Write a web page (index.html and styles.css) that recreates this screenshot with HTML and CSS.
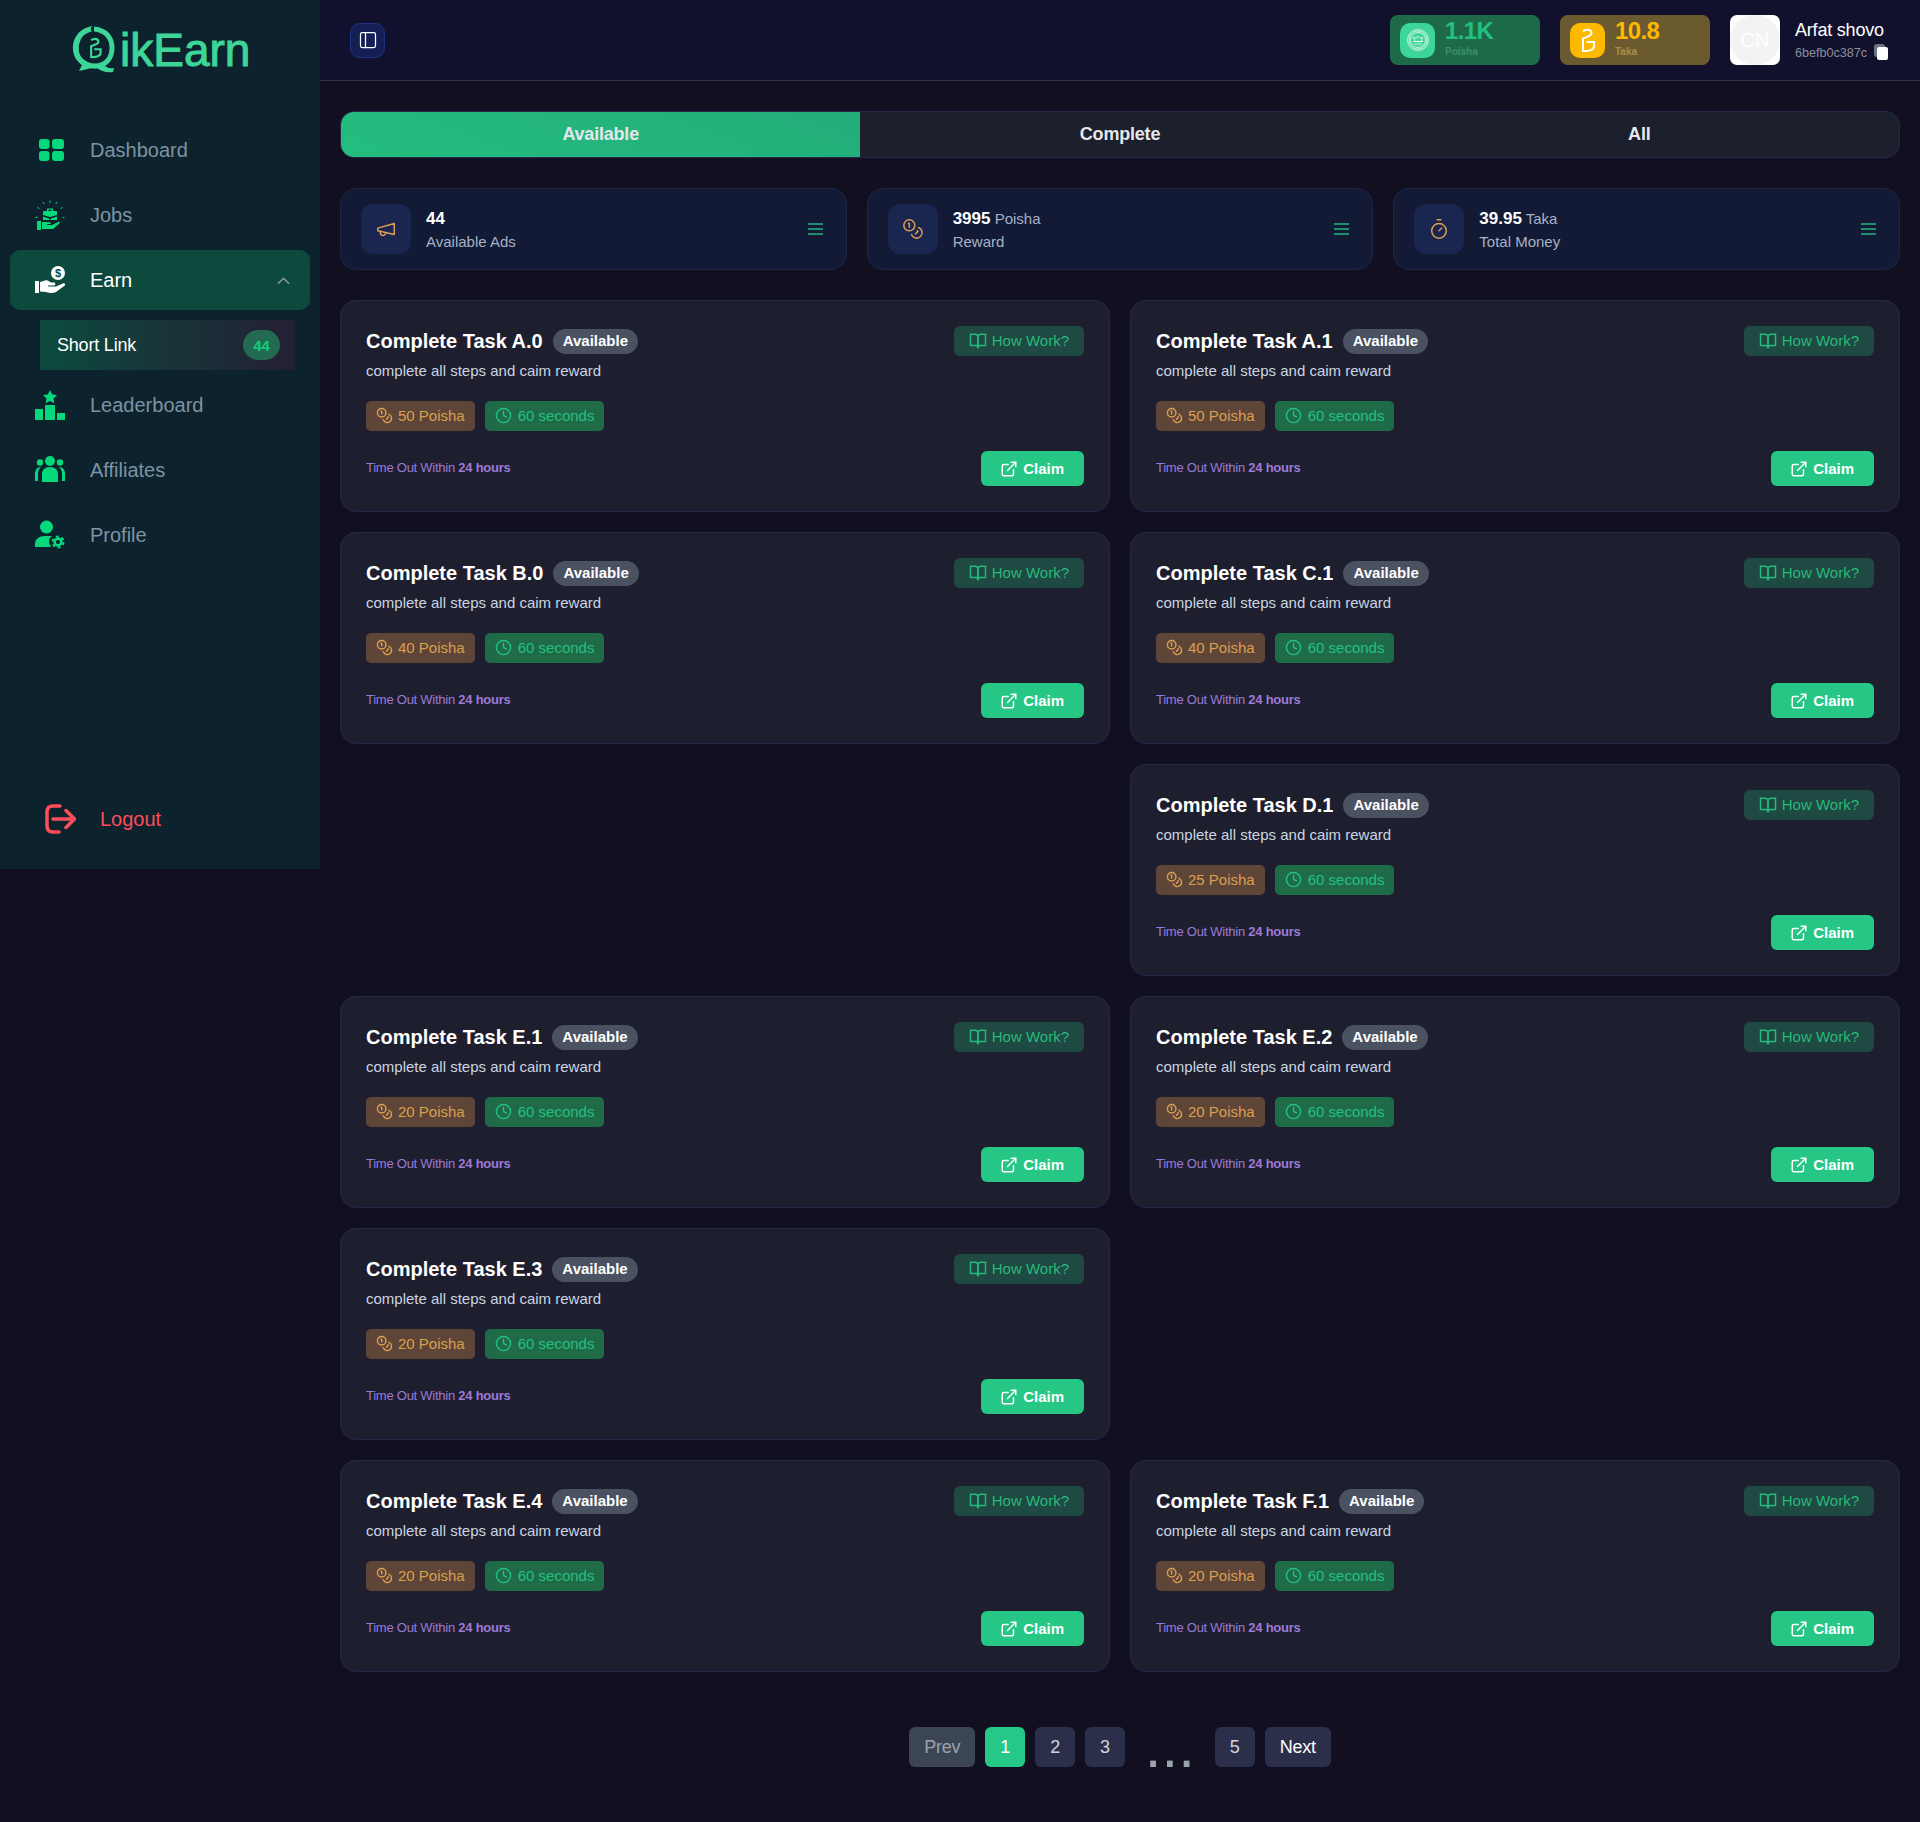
FILE: index.html
```html
<!DOCTYPE html>
<html lang="en">
<head>
  <meta charset="UTF-8">
  <meta name="viewport" content="width=device-width, initial-scale=1.0">
  <title>QikEarn Short Link</title>
  <link rel="stylesheet" href="styles.css">
</head>
<body>
  <svg class="sprite" width="0" height="0">
    <symbol id="coins" viewBox="0 0 24 24"><circle cx="8" cy="8" r="6"/><path d="M18.09 10.37A6 6 0 1 1 10.34 18"/><path d="M7 6h1v4"/><path d="m16.71 13.88.7.71-2.82 2.82"/></symbol>
    <symbol id="clock" viewBox="0 0 24 24"><circle cx="12" cy="12" r="10"/><path d="M12 6v6l4 2"/></symbol>
    <symbol id="book" viewBox="0 0 24 24"><path d="M2 3h6a4 4 0 0 1 4 4v14a3 3 0 0 0-3-3H2z"/><path d="M22 3h-6a4 4 0 0 0-4 4v14a3 3 0 0 1 3-3h7z"/></symbol>
    <symbol id="link" viewBox="0 0 24 24"><path d="M18 13v6a2 2 0 0 1-2 2H5a2 2 0 0 1-2-2V8a2 2 0 0 1 2-2h6"/><path d="M15 3h6v6"/><path d="M10 14 21 3"/></symbol>
    <symbol id="burger" viewBox="0 0 15 12"><path d="M0 1h15M0 6h15M0 11h15"/></symbol>
    <symbol id="gmark" viewBox="0 0 35 35"><path d="M13 8.500C15 6.500 21 5.500 21.500 10C21.500 13.500 16 14 13 15.500V28C19 28.500 24 27 24 23V19H16.500"/></symbol>
  </svg>

  <aside class="sidebar">
    <div class="logo">
      <svg class="logo-q" viewBox="70 24 50 50">
        <path class="q-ring" d="M91 29C79 32 75 41 76 50C77 60 85 66 95 66C106 66 112 58 112 48C112 38 106 30 94 29"/>
        <path class="q-fill" d="M93 26C81 28 72 37 73 50C74 58 78 62 82 65L79 71L92 68C97 69 101 67 103 66C99 66 88 65 81 57C76 48 79 36 93 26Z"/>
        <path class="q-fill" d="M102 63C105 67 109 69 114 68L113 72C106 73 100 71 96 67Z"/>
        <svg x="80" y="33" width="30" height="30"><use href="#gmark" class="q-mark"/></svg>
      </svg>
      <span class="logo-text">ikEarn</span>
    </div>

    <nav class="nav">
      <a class="nav-item" href="#">
        <svg class="nav-ico" viewBox="0 0 30 30"><rect x="4" y="4" width="10.500" height="10" rx="3"/><rect x="17" y="4" width="12" height="10" rx="3"/><rect x="4" y="16" width="10.500" height="10" rx="3"/><rect x="17" y="16" width="12" height="10" rx="3"/></svg>
        Dashboard
      </a>
      <a class="nav-item" href="#">
        <svg class="nav-ico" viewBox="0 0 30 30"><path d="M9 11h12a1 1 0 0 1 1 1v3l-7 2-7-2v-3a1 1 0 0 1 1-1zM8 16.500l6 2v1h2v-1l6-2V20H8zM12 11V8.500h6V11h-1.300V9.800h-3.400V11z"/><path d="M2 21h4v9H2zM7 22h6c2 0 3 1 3 2h-4v1h5l6-3c1-.6 2.500.5 1.500 1.500L18 29H7z"/><path class="nav-ray" d="M15 .5v2.500M8 2l1.200 2M22 2l-1.200 2M2.500 7.500l2 1M27.500 7.500l-2 1M.5 17.500h2M27.500 17.500h2"/></svg>
        Jobs
      </a>
      <a class="nav-item active" href="#">
        <svg class="nav-ico" viewBox="0 0 30 30"><circle cx="23" cy="8" r="7"/><text class="coin-sign" x="23" y="12">$</text><path d="M0 16h4v12H0zM5 17l5-1.500c2-.5 3 0 4 .8l2 1.200h3c1.500 0 2 2.500 0 3h-6v1h8l7-3c2-.6 3 1 1.500 2.200L21 27c-3 1.500-7 1-10 0l-6-.5z"/></svg>
        Earn
        <svg class="chev" viewBox="0 0 14 8"><path d="M1 7l6-6 6 6"/></svg>
      </a>
      <a class="sub-item" href="#">Short Link <span class="sub-badge">44</span></a>
      <a class="nav-item" href="#">
        <svg class="nav-ico" viewBox="0 0 30 30"><path d="M15 0l2.200 4.400 4.800.7-3.500 3.400.8 4.800-4.300-2.300-4.300 2.300.8-4.800L8 5.100l4.800-.7z"/><rect y="19" width="8" height="11"/><rect x="10" y="15" width="10" height="15" rx="1"/><rect x="22" y="23" width="8" height="7"/></svg>
        Leaderboard
      </a>
      <a class="nav-item" href="#">
        <svg class="nav-ico" viewBox="0 0 30 30"><circle cx="15" cy="6" r="5"/><circle cx="5" cy="7.500" r="3.200"/><circle cx="25" cy="7.500" r="3.200"/><path d="M7 27V19c0-4 3-7 8-7s8 3 8 7v8zM0 26v-7c0-4 2-7 6-7-2 2-3 4-3 7v7zM30 26v-7c0-4-2-7-6-7 2 2 3 4 3 7v7z"/></svg>
        Affiliates
      </a>
      <a class="nav-item" href="#">
        <svg class="nav-ico" viewBox="0 0 30 30"><circle cx="11.500" cy="7" r="6.500"/><path d="M0 27v-3c0-5 4-8 10-8h7c-2 1.500-3 3-3 5 0 2 1 4 2 6z"/><circle class="gear-hub" cx="23" cy="22" r="3.400"/><circle class="gear-teeth" cx="23" cy="22" r="5.500"/></svg>
        Profile
      </a>
    </nav>

    <a class="logout" href="#">
      <svg class="logout-ico" viewBox="0 0 32 32"><path d="M16 3H9C5 3 3 5 3 9v14c0 4 2 6 6 6h6"/><path d="M9 16h21M22 7.500l8.500 8.500-8.500 8.500"/></svg>
      Logout
    </a>
  </aside>

  <div class="page">
    <header class="topbar">
      <button class="toggle">
        <svg class="ico toggle-ico" viewBox="0 0 24 24"><rect x="3" y="3" width="18" height="18" rx="2"/><path d="M9 3v18"/></svg>
      </button>
      <div class="wallet wallet-green">
        <span class="wallet-ico">
          <svg viewBox="0 0 24 24" class="seal"><circle cx="12" cy="12" r="10.500"/><circle cx="12" cy="12" r="9"/><circle cx="12" cy="12" r="7.500"/><path d="M7 13.500h10M8 16h8M7.500 9l2.500 1.500 2-2.500 2 2.500L16.500 9l-1 4.500h-7z"/></svg>
        </span>
        <div>
          <div class="wallet-value">1.1K</div>
          <div class="wallet-label">Poisha</div>
        </div>
      </div>
      <div class="wallet wallet-gold">
        <span class="wallet-ico"><svg class="gmark-white" viewBox="0 0 35 35"><use href="#gmark"/></svg></span>
        <div>
          <div class="wallet-value">10.8</div>
          <div class="wallet-label">Taka</div>
        </div>
      </div>
      <div class="avatar"><span>CN</span></div>
      <div class="user">
        <div class="user-name">Arfat shovo</div>
        <div class="user-id">6befb0c387c
          <svg class="copy" viewBox="0 0 15 17"><rect x="0" y="0" width="11" height="13" rx="3" fill="#6b7280"/><rect x="3" y="3" width="11" height="13" rx="2" fill="#fff"/></svg>
        </div>
      </div>
    </header>

    <main class="content">
      <div class="tabs">
        <a class="tab tab-on" href="#">Available</a>
        <a class="tab" href="#">Complete</a>
        <a class="tab" href="#">All</a>
      </div>

      <section class="stats">
        <div class="stat">
          <span class="stat-ico"><svg class="ico" viewBox="0 0 24 24"><path d="m3 11 18-5v12L3 14v-3z"/><path d="M11.600 16.800a3 3 0 1 1-5.800-1.600"/></svg></span>
          <div class="stat-text"><b>44</b><span>Available Ads</span></div>
          <svg class="burger"><use href="#burger"/></svg>
        </div>
        <div class="stat">
          <span class="stat-ico"><svg class="ico"><use href="#coins"/></svg></span>
          <div class="stat-text"><div><b>3995</b> Poisha</div><span>Reward</span></div>
          <svg class="burger"><use href="#burger"/></svg>
        </div>
        <div class="stat">
          <span class="stat-ico"><svg class="ico" viewBox="0 0 24 24"><path d="M10 2h4"/><path d="m12 14 3-3"/><circle cx="12" cy="14" r="8"/></svg></span>
          <div class="stat-text"><div><b>39.95</b> Taka</div><span>Total Money</span></div>
          <svg class="burger"><use href="#burger"/></svg>
        </div>
      </section>

      <section class="tasks">
        <article class="task">
          <div class="task-main">
            <div class="task-head"><h3>Complete Task A.0</h3><span class="badge">Available</span></div>
            <p class="task-desc">complete all steps and caim reward</p>
            <div class="chips">
              <span class="chip chip-coin"><svg class="ico"><use href="#coins"/></svg>50 Poisha</span>
              <span class="chip chip-time"><svg class="ico"><use href="#clock"/></svg>60 seconds</span>
            </div>
            <p class="task-time">Time Out Within <b>24 hours</b></p>
          </div>
          <div class="task-side">
            <a class="how" href="#"><svg class="ico"><use href="#book"/></svg>How Work?</a>
            <a class="claim" href="#"><svg class="ico"><use href="#link"/></svg>Claim</a>
          </div>
        </article>
        <article class="task">
          <div class="task-main">
            <div class="task-head"><h3>Complete Task A.1</h3><span class="badge">Available</span></div>
            <p class="task-desc">complete all steps and caim reward</p>
            <div class="chips">
              <span class="chip chip-coin"><svg class="ico"><use href="#coins"/></svg>50 Poisha</span>
              <span class="chip chip-time"><svg class="ico"><use href="#clock"/></svg>60 seconds</span>
            </div>
            <p class="task-time">Time Out Within <b>24 hours</b></p>
          </div>
          <div class="task-side">
            <a class="how" href="#"><svg class="ico"><use href="#book"/></svg>How Work?</a>
            <a class="claim" href="#"><svg class="ico"><use href="#link"/></svg>Claim</a>
          </div>
        </article>
        <article class="task">
          <div class="task-main">
            <div class="task-head"><h3>Complete Task B.0</h3><span class="badge">Available</span></div>
            <p class="task-desc">complete all steps and caim reward</p>
            <div class="chips">
              <span class="chip chip-coin"><svg class="ico"><use href="#coins"/></svg>40 Poisha</span>
              <span class="chip chip-time"><svg class="ico"><use href="#clock"/></svg>60 seconds</span>
            </div>
            <p class="task-time">Time Out Within <b>24 hours</b></p>
          </div>
          <div class="task-side">
            <a class="how" href="#"><svg class="ico"><use href="#book"/></svg>How Work?</a>
            <a class="claim" href="#"><svg class="ico"><use href="#link"/></svg>Claim</a>
          </div>
        </article>
        <article class="task">
          <div class="task-main">
            <div class="task-head"><h3>Complete Task C.1</h3><span class="badge">Available</span></div>
            <p class="task-desc">complete all steps and caim reward</p>
            <div class="chips">
              <span class="chip chip-coin"><svg class="ico"><use href="#coins"/></svg>40 Poisha</span>
              <span class="chip chip-time"><svg class="ico"><use href="#clock"/></svg>60 seconds</span>
            </div>
            <p class="task-time">Time Out Within <b>24 hours</b></p>
          </div>
          <div class="task-side">
            <a class="how" href="#"><svg class="ico"><use href="#book"/></svg>How Work?</a>
            <a class="claim" href="#"><svg class="ico"><use href="#link"/></svg>Claim</a>
          </div>
        </article>
        <div class="task-gap"></div>
        <article class="task">
          <div class="task-main">
            <div class="task-head"><h3>Complete Task D.1</h3><span class="badge">Available</span></div>
            <p class="task-desc">complete all steps and caim reward</p>
            <div class="chips">
              <span class="chip chip-coin"><svg class="ico"><use href="#coins"/></svg>25 Poisha</span>
              <span class="chip chip-time"><svg class="ico"><use href="#clock"/></svg>60 seconds</span>
            </div>
            <p class="task-time">Time Out Within <b>24 hours</b></p>
          </div>
          <div class="task-side">
            <a class="how" href="#"><svg class="ico"><use href="#book"/></svg>How Work?</a>
            <a class="claim" href="#"><svg class="ico"><use href="#link"/></svg>Claim</a>
          </div>
        </article>
        <article class="task">
          <div class="task-main">
            <div class="task-head"><h3>Complete Task E.1</h3><span class="badge">Available</span></div>
            <p class="task-desc">complete all steps and caim reward</p>
            <div class="chips">
              <span class="chip chip-coin"><svg class="ico"><use href="#coins"/></svg>20 Poisha</span>
              <span class="chip chip-time"><svg class="ico"><use href="#clock"/></svg>60 seconds</span>
            </div>
            <p class="task-time">Time Out Within <b>24 hours</b></p>
          </div>
          <div class="task-side">
            <a class="how" href="#"><svg class="ico"><use href="#book"/></svg>How Work?</a>
            <a class="claim" href="#"><svg class="ico"><use href="#link"/></svg>Claim</a>
          </div>
        </article>
        <article class="task">
          <div class="task-main">
            <div class="task-head"><h3>Complete Task E.2</h3><span class="badge">Available</span></div>
            <p class="task-desc">complete all steps and caim reward</p>
            <div class="chips">
              <span class="chip chip-coin"><svg class="ico"><use href="#coins"/></svg>20 Poisha</span>
              <span class="chip chip-time"><svg class="ico"><use href="#clock"/></svg>60 seconds</span>
            </div>
            <p class="task-time">Time Out Within <b>24 hours</b></p>
          </div>
          <div class="task-side">
            <a class="how" href="#"><svg class="ico"><use href="#book"/></svg>How Work?</a>
            <a class="claim" href="#"><svg class="ico"><use href="#link"/></svg>Claim</a>
          </div>
        </article>
        <article class="task">
          <div class="task-main">
            <div class="task-head"><h3>Complete Task E.3</h3><span class="badge">Available</span></div>
            <p class="task-desc">complete all steps and caim reward</p>
            <div class="chips">
              <span class="chip chip-coin"><svg class="ico"><use href="#coins"/></svg>20 Poisha</span>
              <span class="chip chip-time"><svg class="ico"><use href="#clock"/></svg>60 seconds</span>
            </div>
            <p class="task-time">Time Out Within <b>24 hours</b></p>
          </div>
          <div class="task-side">
            <a class="how" href="#"><svg class="ico"><use href="#book"/></svg>How Work?</a>
            <a class="claim" href="#"><svg class="ico"><use href="#link"/></svg>Claim</a>
          </div>
        </article>
        <div class="task-gap"></div>
        <article class="task">
          <div class="task-main">
            <div class="task-head"><h3>Complete Task E.4</h3><span class="badge">Available</span></div>
            <p class="task-desc">complete all steps and caim reward</p>
            <div class="chips">
              <span class="chip chip-coin"><svg class="ico"><use href="#coins"/></svg>20 Poisha</span>
              <span class="chip chip-time"><svg class="ico"><use href="#clock"/></svg>60 seconds</span>
            </div>
            <p class="task-time">Time Out Within <b>24 hours</b></p>
          </div>
          <div class="task-side">
            <a class="how" href="#"><svg class="ico"><use href="#book"/></svg>How Work?</a>
            <a class="claim" href="#"><svg class="ico"><use href="#link"/></svg>Claim</a>
          </div>
        </article>
        <article class="task">
          <div class="task-main">
            <div class="task-head"><h3>Complete Task F.1</h3><span class="badge">Available</span></div>
            <p class="task-desc">complete all steps and caim reward</p>
            <div class="chips">
              <span class="chip chip-coin"><svg class="ico"><use href="#coins"/></svg>20 Poisha</span>
              <span class="chip chip-time"><svg class="ico"><use href="#clock"/></svg>60 seconds</span>
            </div>
            <p class="task-time">Time Out Within <b>24 hours</b></p>
          </div>
          <div class="task-side">
            <a class="how" href="#"><svg class="ico"><use href="#book"/></svg>How Work?</a>
            <a class="claim" href="#"><svg class="ico"><use href="#link"/></svg>Claim</a>
          </div>
        </article>
      </section>

      <div class="pager">
        <a class="pg pg-off" href="#">Prev</a>
        <a class="pg pg-on" href="#">1</a>
        <a class="pg" href="#">2</a>
        <a class="pg" href="#">3</a>
        <span class="pg-dots">...</span>
        <a class="pg" href="#">5</a>
        <a class="pg pg-next" href="#">Next</a>
      </div>
    </main>
  </div>
</body>
</html>
```

FILE: styles.css
```css
* {
  box-sizing: border-box;
}
body {
  margin: 0;
  min-height: 1822px;
  display: flex;
  align-items: flex-start;
  font-family: "Liberation Sans", Arial, sans-serif;
  background: #110f20;
  color: #fff;
}
a {
  text-decoration: none;
  color: inherit;
}
h3, p {
  margin: 0;
}
.sprite {
  position: absolute;
}
.ico {
  width: 17px;
  height: 17px;
  fill: none;
  stroke: currentColor;
  stroke-width: 2;
  stroke-linecap: round;
  stroke-linejoin: round;
  flex: none;
}

/* sidebar */
.sidebar {
  width: 320px;
  height: 869px;
  flex: none;
  display: flex;
  flex-direction: column;
  background: #0c222d;
}
.logo {
  height: 120px;
  display: flex;
  align-items: flex-start;
  padding: 24px 0 0 70px;
}
.logo-q {
  width: 50px;
  height: 50px;
  flex: none;
}
.q-ring {
  fill: none;
  stroke: #3dd598;
  stroke-width: 5;
}
.q-fill {
  fill: #3dd598;
}
.q-mark {
  fill: none;
  stroke: #3dd598;
  stroke-width: 2.500;
}
.logo-text {
  font-size: 46px;
  line-height: 50px;
  color: #3dd598;
  -webkit-text-stroke: 1px #3dd598;
  margin-top: 1px;
}
.nav {
  display: flex;
  flex-direction: column;
  gap: 5px;
}
.nav-item {
  height: 60px;
  margin: 0 10px;
  padding: 0 25px;
  display: flex;
  align-items: center;
  gap: 25px;
  font-size: 20px;
  color: #7e93a3;
  border-radius: 10px;
}
.nav-ico {
  width: 30px;
  height: 30px;
  flex: none;
  fill: #05d97c;
}
.nav-ray {
  fill: none;
  stroke: #05d97c;
  stroke-width: 1;
}
.gear-hub {
  fill: none;
  stroke: #05d97c;
  stroke-width: 2.600;
}
.gear-teeth {
  fill: none;
  stroke: #05d97c;
  stroke-width: 2;
  stroke-dasharray: 3 2.760;
}
.nav-item.active {
  background: #0c4a3e;
  color: #fff;
}
.active .nav-ico {
  fill: #fff;
}
.coin-sign {
  fill: #0c4a3e;
  font-size: 11px;
  font-weight: bold;
  text-anchor: middle;
}
.chev {
  width: 13px;
  height: 8px;
  margin-left: auto;
  margin-right: -5px;
  margin-top: 2px;
  fill: none;
  stroke: #8a9ca6;
  stroke-width: 1.500;
}
.sub-item {
  height: 50px;
  margin: 5px 25px 0 40px;
  padding: 0 17px;
  display: flex;
  align-items: center;
  justify-content: space-between;
  font-size: 18px;
  letter-spacing: -.2px;
  background: linear-gradient(90deg, #0c4a3e, #241f33);
}
.sub-badge {
  width: 37px;
  height: 30px;
  margin-right: -2px;
  display: flex;
  align-items: center;
  justify-content: center;
  font-size: 15px;
  font-weight: bold;
  letter-spacing: 0;
  color: #12cc7c;
  background: #236a53;
  border-radius: 15px;
}
.logout {
  height: 60px;
  margin-top: auto;
  margin-bottom: 20px;
  padding-left: 44px;
  display: flex;
  align-items: center;
  gap: 24px;
  font-size: 20px;
  color: #ff4d5a;
}
.logout-ico {
  width: 32px;
  height: 32px;
  fill: none;
  stroke: #ff4d5a;
  stroke-width: 3.500;
  stroke-linecap: round;
  stroke-linejoin: round;
}

/* top bar */
.page {
  flex: 1;
  min-width: 0;
}
.topbar {
  height: 81px;
  padding: 0 20px 0 30px;
  display: flex;
  align-items: center;
  background: #12112d;
  border-bottom: 1px solid #37344d;
}
.toggle {
  width: 35px;
  height: 35px;
  margin-right: auto;
  padding: 0;
  display: flex;
  align-items: center;
  justify-content: center;
  color: #fff;
  background: #131f55;
  border: 1px solid #1e3480;
  border-radius: 10px;
}
.toggle-ico {
  width: 20px;
  height: 20px;
  stroke-width: 1.500;
}
.wallet {
  width: 150px;
  height: 50px;
  margin-right: 20px;
  padding-left: 10px;
  display: flex;
  align-items: center;
  gap: 10px;
  border-radius: 8px;
  font-weight: bold;
}
.wallet-ico {
  width: 35px;
  height: 35px;
  display: flex;
  align-items: center;
  justify-content: center;
  border-radius: 10px;
  flex: none;
}
.wallet-value {
  font-size: 24px;
  line-height: 26px;
  letter-spacing: -.6px;
  margin-top: -5px;
}
.wallet-label {
  font-size: 10px;
  line-height: 13px;
  margin-top: 1px;
}
.wallet-green {
  background: #1e6a48;
}
.wallet-green .wallet-ico {
  background: #3dd598;
}
.wallet-green .wallet-value {
  color: #22c07e;
}
.wallet-green .wallet-label {
  color: #3c8f6a;
}
.seal {
  width: 24px;
  height: 24px;
  fill: none;
  stroke: #fff;
  stroke-width: .7;
}
.wallet-gold {
  background: #6b5a30;
}
.wallet-gold .wallet-ico {
  background: #fdb900;
}
.wallet-gold .wallet-value {
  color: #fdb900;
}
.wallet-gold .wallet-label {
  color: #a88f45;
}
.gmark-white {
  width: 35px;
  height: 35px;
  fill: none;
  stroke: #fff;
  stroke-width: 2;
}
.avatar {
  width: 50px;
  height: 50px;
  background: #fff;
  border-radius: 7px;
  flex: none;
}
.avatar span {
  width: 100%;
  height: 100%;
  display: flex;
  align-items: center;
  justify-content: center;
  font-size: 20px;
  color: #fff;
  background: #f3f3f3;
  border-radius: 50%;
}
.user {
  margin-left: 15px;
  width: 105px;
}
.user-name {
  font-size: 18px;
  line-height: 22px;
  letter-spacing: -.2px;
}
.user-id {
  margin-top: 3px;
  display: flex;
  align-items: center;
  gap: 7px;
  font-size: 12.600px;
  line-height: 16px;
  color: #8a8f99;
}
.copy {
  width: 15px;
  height: 17px;
}

/* main */
.content {
  padding: 30px 20px 0;
}
.tabs {
  height: 47px;
  display: grid;
  grid-template-columns: repeat(3, 1fr);
  background: #1c1f2c;
  border: 1px solid #24294a;
  border-radius: 14px;
  overflow: hidden;
}
.tab {
  display: flex;
  align-items: center;
  justify-content: center;
  font-size: 18px;
  font-weight: bold;
  letter-spacing: -.2px;
  color: #e5e7eb;
}
.tab-on {
  background: linear-gradient(200deg, #22ad78, #25bd80);
}
.stats {
  margin-top: 30px;
  display: grid;
  grid-template-columns: repeat(3, 1fr);
  gap: 20px;
}
.stat {
  height: 82px;
  padding: 0 23px 0 20px;
  display: flex;
  align-items: center;
  gap: 15px;
  background: #121a35;
  border: 1px solid #1c2748;
  border-radius: 16px;
}
.stat-ico {
  width: 50px;
  height: 50px;
  display: flex;
  align-items: center;
  justify-content: center;
  color: #dc9f50;
  background: #1a2650;
  border-radius: 12px;
  flex: none;
}
.stat-ico .ico {
  width: 22px;
  height: 22px;
  stroke-width: 1.600;
}
.stat-text {
  flex: 1;
  padding-top: 1px;
  font-size: 15px;
  line-height: 23px;
  color: #a6b1c6;
}
.stat-text b {
  font-size: 17px;
  color: #fff;
}
.stat-text span {
  display: block;
}
.burger {
  width: 15px;
  height: 12px;
  fill: none;
  stroke: #1d8f6e;
  stroke-width: 2;
}

/* task cards */
.tasks {
  margin-top: 30px;
  display: grid;
  grid-template-columns: repeat(2, 1fr);
  gap: 20px;
}
.task, .task-gap {
  height: 212px;
}
.task {
  padding: 25px;
  display: flex;
  justify-content: space-between;
  background: #1e1f2e;
  border: 1px solid #24294a;
  border-radius: 16px;
}
.task-head {
  height: 30px;
  display: flex;
  align-items: center;
  gap: 10px;
}
.task-head h3 {
  font-size: 20px;
  font-weight: bold;
}
.badge {
  height: 25px;
  padding: 0 10px 1px;
  display: flex;
  align-items: center;
  font-size: 15px;
  font-weight: bold;
  background: #4a5160;
  border-radius: 13px;
}
.task-desc {
  margin-top: 5px;
  font-size: 15px;
  line-height: 20px;
  color: #cbd5e1;
}
.chips {
  margin-top: 20px;
  display: flex;
  gap: 10px;
}
.chip {
  height: 30px;
  padding: 0 10px 1px;
  display: flex;
  align-items: center;
  gap: 5px;
  font-size: 15px;
  border-radius: 5px;
}
.chip-coin {
  color: #d9a050;
  background: #5e4538;
}
.chip-time {
  gap: 6px;
  color: #24c07f;
  background: #1f6b47;
}
.task-time {
  margin-top: 28px;
  font-size: 13px;
  line-height: 18px;
  letter-spacing: -.25px;
  color: #9c7ad8;
}
.task-side {
  display: flex;
  flex-direction: column;
  align-items: flex-end;
  justify-content: space-between;
}
.how {
  height: 30px;
  padding: 0 15px 1px;
  display: flex;
  align-items: center;
  gap: 5px;
  font-size: 15px;
  color: #25b97a;
  background: #1f4a43;
  border-radius: 6px;
}
.how .ico {
  width: 18px;
  height: 18px;
}
.claim {
  height: 35px;
  padding: 0 20px 0 19px;
  display: flex;
  align-items: center;
  gap: 5px;
  font-size: 15px;
  font-weight: bold;
  background: #26c685;
  border-radius: 6px;
}
.claim .ico {
  width: 18px;
  height: 18px;
}

/* pagination */
.pager {
  margin-top: 55px;
  display: flex;
  justify-content: center;
  gap: 10px;
}
.pg {
  height: 40px;
  padding: 0 15px;
  display: flex;
  align-items: center;
  font-size: 18px;
  letter-spacing: -.2px;
  color: #d1d5db;
  background: #2b2f4a;
  border-radius: 6px;
}
.pg-off {
  color: #9ca3af;
  background: #3c4554;
}
.pg-on {
  color: #fff;
  background: #26c887;
}
.pg-next {
  color: #fff;
}
.pg-dots {
  padding: 0 10px;
  font-size: 60px;
  line-height: 40px;
  color: #9ca3af;
}
```
